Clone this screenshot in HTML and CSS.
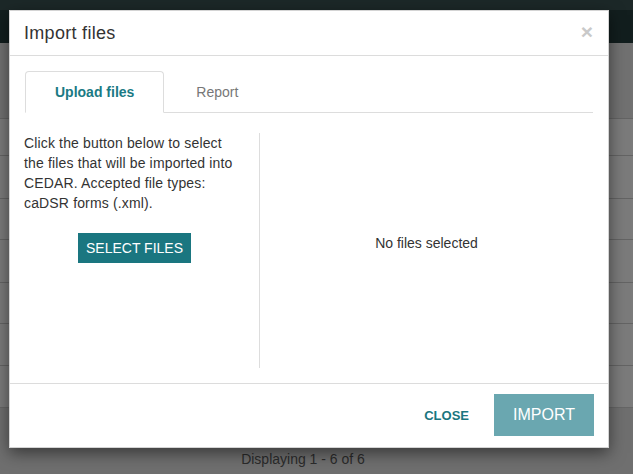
FILE: index.html
```html
<!DOCTYPE html>
<html lang="en">
<head>
<meta charset="utf-8">
<title>Import files</title>
<link rel="stylesheet" href="styles.css">
</head>
<body>
<div class="page">
  <div class="navbar"><div class="navbar-top"></div></div>
  <div class="toolbar"></div>
  <div class="list">
    <div class="list-row r1"></div>
    <div class="list-row r2"></div>
    <div class="list-row r3"></div>
    <div class="list-row r4"></div>
    <div class="list-row r5"></div>
    <div class="list-row r6"></div>
    <div class="list-row r7"></div>
  </div>
  <div class="list-footer">Displaying 1 - 6 of 6</div>
</div>

<div class="modal">
  <div class="modal-header">
    <h4 class="modal-title">Import files</h4>
    <button class="close-x" type="button">&times;</button>
  </div>
  <div class="modal-body">
    <ul class="tabs">
      <li class="tab active">Upload files</li>
      <li class="tab">Report</li>
    </ul>
    <div class="content-row">
      <div class="col-left">
        <p class="intro">Click the button below to select the files that will be imported into CEDAR. Accepted file types: caDSR forms (.xml).</p>
        <div class="select-wrap"><button class="btn-select" type="button">SELECT FILES</button></div>
      </div>
      <div class="col-right">
        <p class="empty">No files selected</p>
      </div>
    </div>
  </div>
  <div class="modal-footer">
    <button class="btn-close" type="button">CLOSE</button>
    <button class="btn-import" type="button">IMPORT</button>
  </div>
</div>
</body>
</html>
```

FILE: styles.css
```css
* { box-sizing: border-box; }

html, body {
  margin: 0;
  padding: 0;
  width: 633px;
  height: 474px;
  overflow: hidden;
  font-family: "Liberation Sans", Arial, sans-serif;
  color: #333;
}

.page {
  height: 474px;
  display: flex;
  flex-direction: column;
  background: #717171;
}

.navbar {
  height: 43px;
  background: #121e1e;
}
.navbar-top {
  height: 10px;
  background: #1c2828;
}

.toolbar {
  height: 75px;
  background: #717171;
}

.list-row {
  background: #7b7b7b;
  border-top: 1px solid #646464;
}
.r1 { height: 37px; }
.r2 { height: 43px; }
.r3 { height: 41px; }
.r4 { height: 43px; }
.r5 { height: 41px; }
.r6 { height: 42px; }
.r7 { height: 42px; }

.list-footer {
  flex: 1;
  border-top: 1px solid #666;
  background: #6f6f6f;
  color: #2b2b2b;
  font-size: 14px;
  line-height: 20px;
  text-align: center;
  padding: 41px 27px 0 0;
}

/* modal (overlays the page) */
.modal {
  position: absolute;
  top: 10px;
  left: 9px;
  width: 600px;
  background: #fff;
  border: 1px solid #d4d4d4;
  box-shadow: 0 5px 15px rgba(0, 0, 0, 0.5);
}

.modal-header {
  height: 45px;
  padding: 10px 15px 10px 15px;
  border-bottom: 1px solid #dcdcdc;
  display: flex;
  align-items: center;
  justify-content: space-between;
}
.modal-title {
  margin: 0 0 0 -1px;
  font-size: 18px;
  line-height: 24px;
  font-weight: normal;
  letter-spacing: 0.3px;
  color: #333;
}
.close-x {
  border: 0;
  background: none;
  padding: 0;
  font-family: "Liberation Sans", Arial, sans-serif;
  font-size: 21px;
  font-weight: bold;
  line-height: 1;
  color: #c9c9c9;
  margin-top: -4px;
}

.modal-body {
  padding: 15px;
}

.tabs {
  list-style: none;
  margin: 0;
  padding: 0;
  display: flex;
  border-bottom: 1px solid #ddd;
}
.tab {
  margin: 0 2px -1px 0;
  padding: 10px 29px;
  font-size: 14px;
  line-height: 20px;
  color: #777;
  border: 1px solid transparent;
  border-radius: 4px 4px 0 0;
}
.tab.active {
  color: #1a7a84;
  font-weight: bold;
  background: #fff;
  border-color: #ddd #ddd #fff #ddd;
}

.content-row {
  margin-top: 20px;
  height: 235px;
  display: flex;
}
.col-left {
  width: 235px;
  padding-right: 15px;
  border-right: 1px solid #ddd;
}
.intro {
  margin: 0 0 0 -1px;
  max-width: 216px;
  font-size: 14px;
  line-height: 20px;
  letter-spacing: 0.15px;
  color: #333;
}
.select-wrap {
  margin-top: 20px;
  display: flex;
  justify-content: center;
}
.btn-select {
  height: 30px;
  padding: 0 8px;
  border: 0;
  border-radius: 0;
  background: #1a7680;
  color: #fff;
  font-family: "Liberation Sans", Arial, sans-serif;
  font-size: 14px;
}

.col-right {
  flex: 1;
  padding-top: 100px;
  text-align: center;
}
.empty {
  margin: 0;
  font-size: 14px;
  line-height: 20px;
  color: #333;
}

.modal-footer {
  border-top: 1px solid #dcdcdc;
  padding: 10px 14px 11px 15px;
  display: flex;
  justify-content: flex-end;
  align-items: center;
}
.btn-close {
  border: 0;
  background: none;
  padding: 0;
  margin-right: 25px;
  font-family: "Liberation Sans", Arial, sans-serif;
  font-size: 13px;
  font-weight: bold;
  color: #1a7680;
}
.btn-import {
  width: 100px;
  height: 42px;
  border: 0;
  border-radius: 0;
  background: #6aa7b0;
  color: #fff;
  font-family: "Liberation Sans", Arial, sans-serif;
  font-size: 16px;
}
```
